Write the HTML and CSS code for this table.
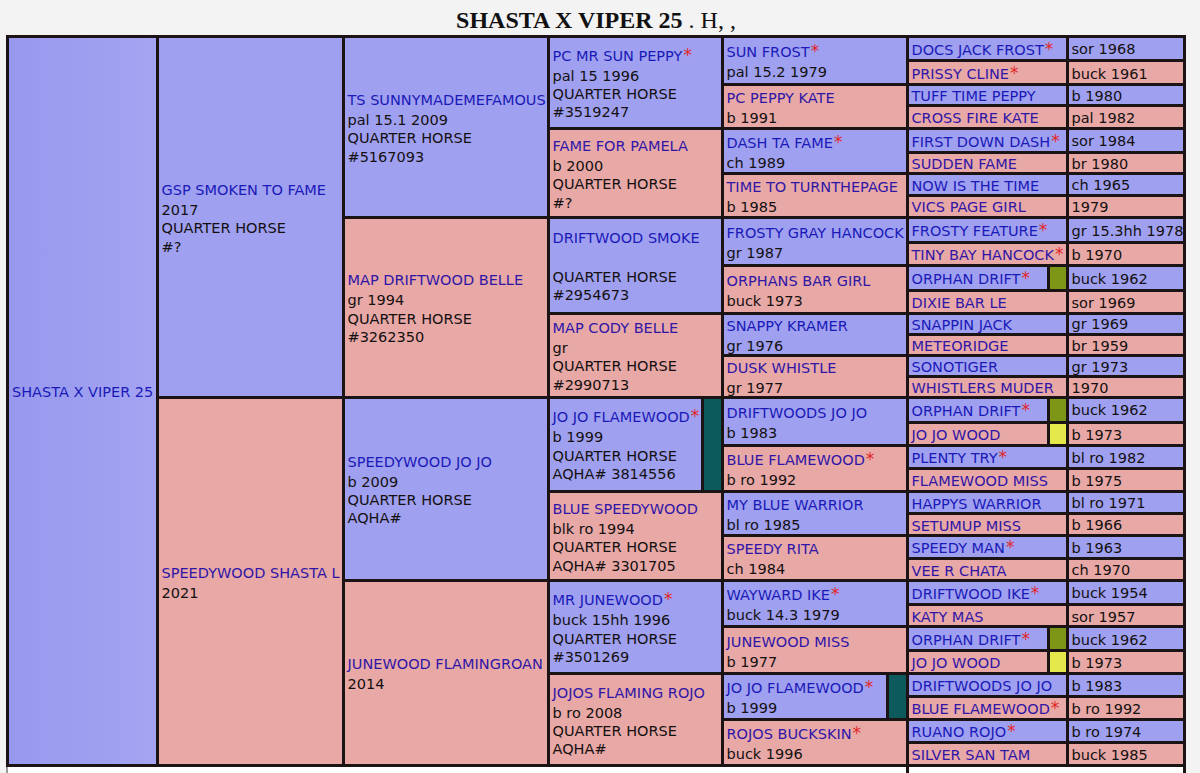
FILE: index.html
```html
<!DOCTYPE html>
<html>
<head>
<meta charset="utf-8">
<title>SHASTA X VIPER 25</title>
<link rel="stylesheet" href="styles.css">
</head>
<body>
<div class="title"><b>SHASTA X VIPER 25</b> . H, ,</div>
<div class="ped">
  <!-- row 1 -->
  <div class="c b s32 g1"><div class="n">SHASTA X VIPER 25</div><div>&nbsp;</div></div>
  <div class="c b s16"><div class="n">GSP SMOKEN TO FAME</div><div>2017</div><div>QUARTER HORSE</div><div>#?</div></div>
  <div class="c b s8"><div class="n">TS SUNNYMADEMEFAMOUS</div><div>pal 15.1 2009</div><div>QUARTER HORSE</div><div>#5167093</div></div>
  <div class="c b s4"><div class="n">PC MR SUN PEPPY<span class="st">*</span></div><div>pal 15 1996</div><div>QUARTER HORSE</div><div>#3519247</div></div>
  <div class="c b s2"><div class="n">SUN FROST<span class="st">*</span></div><div>pal 15.2 1979</div></div>
  <div class="c b g6"><div class="n">DOCS JACK FROST<span class="st">*</span></div></div>
  <div class="c b g7">sor 1968</div>
  <!-- row 2 -->
  <div class="c p g6"><div class="n">PRISSY CLINE<span class="st">*</span></div></div>
  <div class="c p g7">buck 1961</div>
  <!-- row 3 -->
  <div class="c p s2"><div class="n">PC PEPPY KATE</div><div>b 1991</div></div>
  <div class="c b g6"><div class="n">TUFF TIME PEPPY</div></div>
  <div class="c b g7">b 1980</div>
  <!-- row 4 -->
  <div class="c p g6"><div class="n">CROSS FIRE KATE</div></div>
  <div class="c p g7">pal 1982</div>
  <!-- row 5 -->
  <div class="c p s4"><div class="n">FAME FOR PAMELA</div><div>b 2000</div><div>QUARTER HORSE</div><div>#?</div></div>
  <div class="c b s2"><div class="n">DASH TA FAME<span class="st">*</span></div><div>ch 1989</div></div>
  <div class="c b g6"><div class="n">FIRST DOWN DASH<span class="st">*</span></div></div>
  <div class="c b g7">sor 1984</div>
  <!-- row 6 -->
  <div class="c p g6"><div class="n">SUDDEN FAME</div></div>
  <div class="c p g7">br 1980</div>
  <!-- row 7 -->
  <div class="c p s2"><div class="n">TIME TO TURNTHEPAGE</div><div>b 1985</div></div>
  <div class="c b g6"><div class="n">NOW IS THE TIME</div></div>
  <div class="c b g7">ch 1965</div>
  <!-- row 8 -->
  <div class="c p g6"><div class="n">VICS PAGE GIRL</div></div>
  <div class="c p g7">1979</div>
  <!-- row 9 -->
  <div class="c p s8"><div class="n">MAP DRIFTWOOD BELLE</div><div>gr 1994</div><div>QUARTER HORSE</div><div>#3262350</div></div>
  <div class="c b s4"><div class="n">DRIFTWOOD SMOKE</div><div>&nbsp;</div><div>QUARTER HORSE</div><div>#2954673</div></div>
  <div class="c b s2"><div class="n">FROSTY GRAY HANCOCK</div><div>gr 1987</div></div>
  <div class="c b g6"><div class="n">FROSTY FEATURE<span class="st">*</span></div></div>
  <div class="c b g7">gr 15.3hh 1978</div>
  <!-- row 10 -->
  <div class="c p g6"><div class="n">TINY BAY HANCOCK<span class="st">*</span></div></div>
  <div class="c p g7">b 1970</div>
  <!-- row 11 -->
  <div class="c p s2"><div class="n">ORPHANS BAR GIRL</div><div>buck 1973</div></div>
  <div class="m b g6"><div class="t"><div class="n">ORPHAN DRIFT<span class="st">*</span></div></div><div class="mk olive"></div></div>
  <div class="c b g7">buck 1962</div>
  <!-- row 12 -->
  <div class="c p g6"><div class="n">DIXIE BAR LE</div></div>
  <div class="c p g7">sor 1969</div>
  <!-- row 13 -->
  <div class="c p s4"><div class="n">MAP CODY BELLE</div><div>gr</div><div>QUARTER HORSE</div><div>#2990713</div></div>
  <div class="c b s2"><div class="n">SNAPPY KRAMER</div><div>gr 1976</div></div>
  <div class="c b g6"><div class="n">SNAPPIN JACK</div></div>
  <div class="c b g7">gr 1969</div>
  <!-- row 14 -->
  <div class="c p g6"><div class="n">METEORIDGE</div></div>
  <div class="c p g7">br 1959</div>
  <!-- row 15 -->
  <div class="c p s2"><div class="n">DUSK WHISTLE</div><div>gr 1977</div></div>
  <div class="c b g6"><div class="n">SONOTIGER</div></div>
  <div class="c b g7">gr 1973</div>
  <!-- row 16 -->
  <div class="c p g6"><div class="n">WHISTLERS MUDER</div></div>
  <div class="c p g7">1970</div>
  <!-- row 17 -->
  <div class="c p s16"><div class="n">SPEEDYWOOD SHASTA L</div><div>2021</div></div>
  <div class="c b s8"><div class="n">SPEEDYWOOD JO JO</div><div>b 2009</div><div>QUARTER HORSE</div><div>AQHA#</div></div>
  <div class="m b s4"><div class="t"><div class="n">JO JO FLAMEWOOD<span class="st">*</span></div><div>b 1999</div><div>QUARTER HORSE</div><div>AQHA# 3814556</div></div><div class="mk teal wide"></div></div>
  <div class="c b s2"><div class="n">DRIFTWOODS JO JO</div><div>b 1983</div></div>
  <div class="m b g6"><div class="t"><div class="n">ORPHAN DRIFT<span class="st">*</span></div></div><div class="mk olive"></div></div>
  <div class="c b g7">buck 1962</div>
  <!-- row 18 -->
  <div class="m p g6"><div class="t"><div class="n">JO JO WOOD</div></div><div class="mk yel"></div></div>
  <div class="c p g7">b 1973</div>
  <!-- row 19 -->
  <div class="c p s2"><div class="n">BLUE FLAMEWOOD<span class="st">*</span></div><div>b ro 1992</div></div>
  <div class="c b g6"><div class="n">PLENTY TRY<span class="st">*</span></div></div>
  <div class="c b g7">bl ro 1982</div>
  <!-- row 20 -->
  <div class="c p g6"><div class="n">FLAMEWOOD MISS</div></div>
  <div class="c p g7">b 1975</div>
  <!-- row 21 -->
  <div class="c p s4"><div class="n">BLUE SPEEDYWOOD</div><div>blk ro 1994</div><div>QUARTER HORSE</div><div>AQHA# 3301705</div></div>
  <div class="c b s2"><div class="n">MY BLUE WARRIOR</div><div>bl ro 1985</div></div>
  <div class="c b g6"><div class="n">HAPPYS WARRIOR</div></div>
  <div class="c b g7">bl ro 1971</div>
  <!-- row 22 -->
  <div class="c p g6"><div class="n">SETUMUP MISS</div></div>
  <div class="c p g7">b 1966</div>
  <!-- row 23 -->
  <div class="c p s2"><div class="n">SPEEDY RITA</div><div>ch 1984</div></div>
  <div class="c b g6"><div class="n">SPEEDY MAN<span class="st">*</span></div></div>
  <div class="c b g7">b 1963</div>
  <!-- row 24 -->
  <div class="c p g6"><div class="n">VEE R CHATA</div></div>
  <div class="c p g7">ch 1970</div>
  <!-- row 25 -->
  <div class="c p s8"><div class="n">JUNEWOOD FLAMINGROAN</div><div>2014</div></div>
  <div class="c b s4"><div class="n">MR JUNEWOOD<span class="st">*</span></div><div>buck 15hh 1996</div><div>QUARTER HORSE</div><div>#3501269</div></div>
  <div class="c b s2"><div class="n">WAYWARD IKE<span class="st">*</span></div><div>buck 14.3 1979</div></div>
  <div class="c b g6"><div class="n">DRIFTWOOD IKE<span class="st">*</span></div></div>
  <div class="c b g7">buck 1954</div>
  <!-- row 26 -->
  <div class="c p g6"><div class="n">KATY MAS</div></div>
  <div class="c p g7">sor 1957</div>
  <!-- row 27 -->
  <div class="c p s2"><div class="n">JUNEWOOD MISS</div><div>b 1977</div></div>
  <div class="m b g6"><div class="t"><div class="n">ORPHAN DRIFT<span class="st">*</span></div></div><div class="mk olive"></div></div>
  <div class="c b g7">buck 1962</div>
  <!-- row 28 -->
  <div class="m p g6"><div class="t"><div class="n">JO JO WOOD</div></div><div class="mk yel"></div></div>
  <div class="c p g7">b 1973</div>
  <!-- row 29 -->
  <div class="c p s4"><div class="n">JOJOS FLAMING ROJO</div><div>b ro 2008</div><div>QUARTER HORSE</div><div>AQHA#</div></div>
  <div class="m b s2"><div class="t"><div class="n">JO JO FLAMEWOOD<span class="st">*</span></div><div>b 1999</div></div><div class="mk teal wide"></div></div>
  <div class="c b g6"><div class="n">DRIFTWOODS JO JO</div></div>
  <div class="c b g7">b 1983</div>
  <!-- row 30 -->
  <div class="c p g6"><div class="n">BLUE FLAMEWOOD<span class="st">*</span></div></div>
  <div class="c p g7">b ro 1992</div>
  <!-- row 31 -->
  <div class="c p s2"><div class="n">ROJOS BUCKSKIN<span class="st">*</span></div><div>buck 1996</div></div>
  <div class="c b g6"><div class="n">RUANO ROJO<span class="st">*</span></div></div>
  <div class="c b g7">b ro 1974</div>
  <!-- row 32 -->
  <div class="c p g6"><div class="n">SILVER SAN TAM</div></div>
  <div class="c p g7">buck 1985</div>
</div>
<div class="foot"><div class="fl"></div><div class="fd"></div><div class="fr"></div></div>
</body>
</html>
```

FILE: styles.css
```css
body {
  margin: 0;
  background: #f3f3f3;
  font-family: "DejaVu Sans", Verdana, sans-serif;
  font-size: 14.5px;
  color: #141010;
}

.title {
  width: 1180px;
  margin-left: 6px;
  text-align: center;
  font-family: "Liberation Serif", "Times New Roman", serif;
  font-size: 24px;
  line-height: 28px;
  padding-top: 6px;
  padding-bottom: 1px;
  color: #111;
}

.title b {
  font-weight: bold;
}

.ped {
  display: grid;
  box-sizing: border-box;
  width: 1180px;
  margin-left: 6px;
  padding: 3px;
  gap: 3px;
  background: #1c1414;
  grid-template-columns: 146.5px 183px 202px 171px 182px 157px 114.5px;
  grid-template-rows: 21px 21.3px 18px 20px 20.7px 18.3px 18.7px 19px 21.6px 20.7px 21.7px 19.6px 18px 18.4px 18px 17.8px 21.8px 20.4px 20.3px 19.7px 19.3px 18.7px 20.3px 18.7px 21.3px 19.3px 20.7px 20.3px 19.4px 20.3px 20.3px 19.7px;
}

.c,
.m .t {
  display: flex;
  flex-direction: column;
  justify-content: center;
  overflow: hidden;
  white-space: nowrap;
  padding-left: 3px;
  line-height: 18.3px;
  min-width: 0;
}

.m {
  display: flex;
  overflow: hidden;
  min-height: 0;
}

.m .t {
  flex: 1;
}

.c {
  min-height: 0;
}

.n {
  padding-top: 2px;
  margin-bottom: 1px;
  line-height: 20px;
  color: #1a1ab8;
}

.g6 .n {
  line-height: 18px;
  margin-bottom: 0;
}

.g7 {
  padding-top: 2px;
}

.p .n {
  color: #3016a6;
}

.st {
  color: #e02828;
  font-size: 17px;
  line-height: 1px;
  margin-left: 1px;
}

.b {
  background: #a0a0f0;
}

.p {
  background: #e8a8a6;
}

.g1 {
  background: linear-gradient(to right, #9898ee, #a4a4f2);
}

.s2 { grid-row: span 2; }
.s4 { grid-row: span 4; }
.s8 { grid-row: span 8; }
.s16 { grid-row: span 16; }
.s32 { grid-row: span 32; }

.mk {
  flex: none;
  width: 16px;
  border-left: 3px solid #1c1414;
}

.mk.wide {
  width: 17px;
}

.olive {
  background: #7d9618;
}

.yel {
  background: #e4e84a;
}

.teal {
  background: #0c5a5c;
}

.foot {
  display: flex;
  width: 1180px;
  height: 10px;
  margin-left: 6px;
}

.fl {
  box-sizing: border-box;
  width: 899.5px;
  background: #fff;
  border-left: 2px solid #9a9a9a;
}

.fd {
  width: 3px;
  background: #1c1414;
}

.fr {
  box-sizing: border-box;
  flex: 1;
  background: #fff;
  border-right: 3px solid #1c1414;
}
```
